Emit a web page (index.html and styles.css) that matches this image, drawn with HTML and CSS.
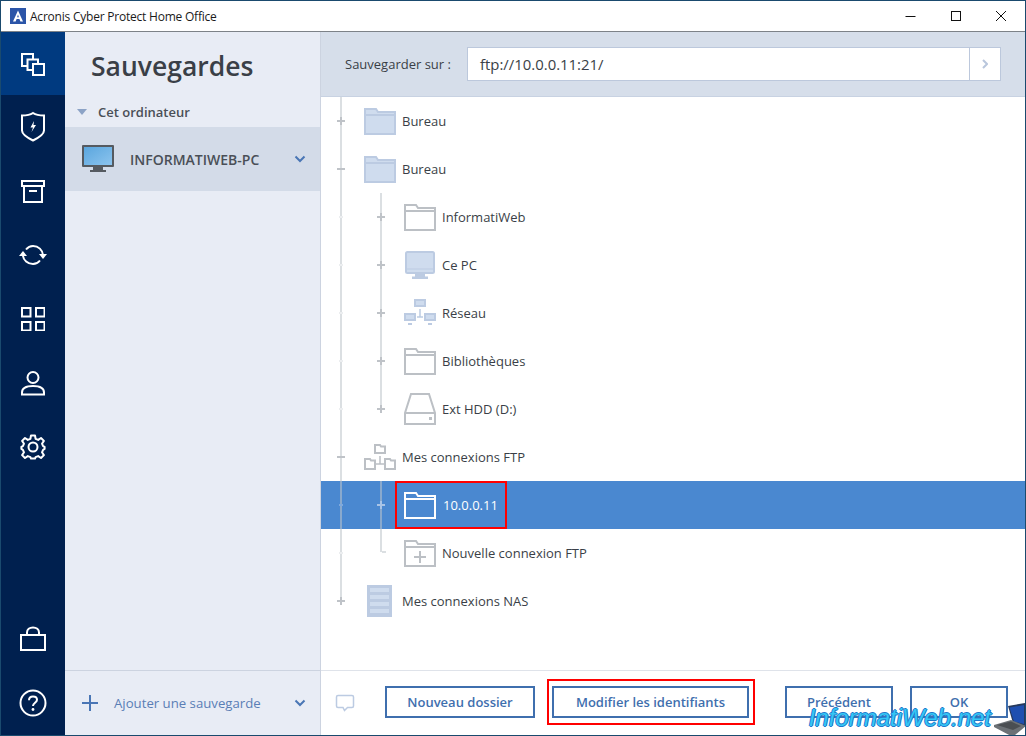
FILE: index.html
```html
<!DOCTYPE html>
<html lang="fr">
<head>
<meta charset="utf-8">
<title>Acronis Cyber Protect Home Office</title>
<link rel="stylesheet" href="styles.css">
</head>
<body>
<div class="window">
  <header class="titlebar">
    <svg class="applogo" width="16" height="16" viewBox="0 0 16 16"><rect width="16" height="16" fill="#2b55a8"/><path d="M8 2.500 L3 13.500 H5.600 L6.600 11 H9.400 L10.400 13.500 H13 Z M8 6.500 L8.900 9.200 H7.100 Z" fill="#fff" fill-rule="evenodd"/></svg>
    <span class="apptitle">Acronis Cyber Protect Home Office</span>
    <div class="winctrls">
      <svg width="12" height="12" viewBox="0 0 12 12"><path d="M0.500 6.500H10.500" stroke="#111" fill="none"/></svg>
      <svg width="12" height="12" viewBox="0 0 12 12"><rect x="1.500" y="1.500" width="9" height="9" stroke="#111" fill="none"/></svg>
      <svg width="12" height="12" viewBox="0 0 12 12"><path d="M1 1L11 11M11 1L1 11" stroke="#111" fill="none"/></svg>
    </div>
  </header>
  <div class="body">
    <nav class="rail">
      <div class="railtop">
        <div class="railitem active">
          <svg width="26" height="26" viewBox="0 0 26 26" fill="none" stroke="#fff" stroke-width="2"><path d="M7 15H2V3H13V8"/><path d="M13 19H7.500V8.500H18V13"/><rect x="13" y="13" width="11" height="11" fill="#003a80"/></svg>
        </div>
        <div class="railitem">
          <svg width="26" height="32" viewBox="0 0 26 32" fill="none" stroke="#fff" stroke-width="2"><path d="M2 4.500C6 4.500 10 4 13 2C16 4 20 4.500 24 4.500V19.500C24 23.500 17 27.500 13 29.500C9 27.500 2 23.500 2 19.500Z"/><path d="M14 10L10.500 16.500H13L11.500 21L16 14H13.500Z" fill="#fff" stroke="none"/></svg>
        </div>
        <div class="railitem">
          <svg width="24" height="24" viewBox="0 0 24 24" fill="none" stroke="#fff" stroke-width="2"><rect x="1" y="2" width="22" height="5"/><path d="M3 7V23H21V7"/><path d="M8 12H16"/></svg>
        </div>
        <div class="railitem">
          <svg width="28" height="24" viewBox="0 0 28 24" fill="none" stroke="#fff" stroke-width="2"><path d="M7 6.500C9 4 11.500 3 14 3C19.500 3 23.500 7 24 12"/><path d="M21 17.500C19 20 16.500 21 14 21C8.500 21 4.500 17 4 13"/><path d="M0 13H8L4 8Z" fill="#fff" stroke="none"/><path d="M20 11H28L24 16Z" fill="#fff" stroke="none"/></svg>
        </div>
        <div class="railitem">
          <svg width="24" height="24" viewBox="0 0 24 24" fill="none" stroke="#fff" stroke-width="2"><rect x="1" y="1" width="8.500" height="8.500"/><rect x="15" y="1" width="8.500" height="8.500"/><rect x="1" y="15" width="8.500" height="8.500"/><rect x="15" y="15" width="8.500" height="8.500"/></svg>
        </div>
        <div class="railitem">
          <svg width="26" height="26" viewBox="0 0 26 26" fill="none" stroke="#fff" stroke-width="2"><circle cx="13" cy="7.500" r="5.500"/><path d="M2 24.500V22.500C2 18 7 16 13 16C19 16 24 18 24 22.500V24.500Z"/></svg>
        </div>
        <div class="railitem">
          <svg width="26" height="26" viewBox="0 0 26 26" fill="none" stroke="#fff" stroke-width="2" stroke-linejoin="round"><circle cx="13" cy="13" r="4.500"/><path d="M11 1.500H15L15.600 4.800L18.200 5.900L21 4L23.900 6.900L22 9.700L23.100 12.200L24.600 13L24.600 14.900L23.100 15.800L22 18.300L23.900 21.100L21 24L18.200 22.100L15.600 23.200L15 24.600H11L10.400 23.200L7.800 22.100L5 24L2.100 21.100L4 18.300L2.900 15.800L1.400 14.900V13L2.900 12.200L4 9.700L2.100 6.900L5 4L7.800 5.900L10.400 4.800Z"/></svg>
        </div>
      </div>
      <div class="railbottom">
        <div class="railitem">
          <svg width="28" height="26" viewBox="0 0 28 26" fill="none" stroke="#fff" stroke-width="2"><rect x="2" y="9" width="24" height="15"/><path d="M8 9V6.500C8 3.500 10.500 1.500 14 1.500C17.500 1.500 20 3.500 20 6.500V9"/></svg>
        </div>
        <div class="railitem">
          <svg width="28" height="28" viewBox="0 0 28 28" fill="none" stroke="#fff" stroke-width="2"><circle cx="14" cy="14" r="12.500"/><path d="M10 11.200C10 8.800 11.800 7.500 14 7.500C16.300 7.500 18 8.800 18 10.800C18 13.800 14 13.800 14 17"/><circle cx="14" cy="20.500" r="1.400" fill="#fff" stroke="none"/></svg>
        </div>
      </div>
    </nav>

    <aside class="sidebar">
      <h1 class="side-title">Sauvegardes</h1>
      <div class="side-group"><span class="tri"></span>Cet ordinateur</div>
      <div class="side-item">
        <svg width="32" height="28" viewBox="0 0 32 28"><defs><linearGradient id="scr" x1="0" y1="0" x2="1" y2="1"><stop offset="0" stop-color="#5aa6de"/><stop offset="1" stop-color="#8cc4ee"/></linearGradient></defs><rect x="0" y="0" width="32" height="22" rx="1" fill="#555a60"/><rect x="2" y="2" width="28" height="18" fill="url(#scr)"/><rect x="11" y="22" width="10" height="3" fill="#555a60"/><rect x="8" y="25" width="16" height="2" fill="#555a60"/></svg>
        <span class="side-name">INFORMATIWEB-PC</span>
        <svg class="chev" width="12" height="8" viewBox="0 0 12 8"><path d="M1.500 1.500L6 6L10.500 1.500" fill="none" stroke="#4a76b5" stroke-width="2"/></svg>
      </div>
      <div class="side-foot">
        <svg width="18" height="18" viewBox="0 0 18 18"><path d="M9 1V17M1 9H17" stroke="#4a76b5" stroke-width="2" fill="none"/></svg>
        <span class="add-label">Ajouter une sauvegarde</span>
        <svg class="chev" width="12" height="8" viewBox="0 0 12 8"><path d="M1.500 1.500L6 6L10.500 1.500" fill="none" stroke="#4a76b5" stroke-width="2"/></svg>
      </div>
    </aside>

    <main class="main">
      <div class="pathbar">
        <label class="pathlabel">Sauvegarder sur :</label>
        <div class="pathinput">
          <span class="pathvalue">ftp://10.0.0.11:21/</span>
          <span class="pathgo"><svg width="6" height="10" viewBox="0 0 6 10"><path d="M1 1L5 5L1 9" fill="none" stroke="#b9c6dc" stroke-width="2"/></svg></span>
        </div>
      </div>

      <div class="tree">
        <i class="line l1"></i>
        <i class="line l2a"></i>
        <i class="line l2b"></i>
        <i class="line l2c"></i>

        <div class="row">
          <span class="exp plus"></span>
          <svg class="ic" width="32" height="28" viewBox="0 0 32 28"><path d="M1 27V2H12L14 5H31V27Z" fill="#cfdcee" stroke="#bccbe2" stroke-width="2"/><path d="M1 8H31" stroke="#bccbe2" stroke-width="2"/></svg>
          <span class="lbl">Bureau</span>
        </div>
        <div class="row">
          <span class="exp minus"></span>
          <svg class="ic" width="32" height="28" viewBox="0 0 32 28"><path d="M1 27V2H12L14 5H31V27Z" fill="#cfdcee" stroke="#bccbe2" stroke-width="2"/><path d="M1 8H31" stroke="#bccbe2" stroke-width="2"/></svg>
          <span class="lbl">Bureau</span>
        </div>
        <div class="row sub">
          <span class="tick"></span><span class="exp plus"></span>
          <svg class="ic" width="32" height="28" viewBox="0 0 32 28"><path d="M1 27V2H12L14 5H31V27Z" fill="#fff" stroke="#bcc0c5" stroke-width="2"/><path d="M1 8H31" stroke="#bcc0c5" stroke-width="2"/></svg>
          <span class="lbl">InformatiWeb</span>
        </div>
        <div class="row sub">
          <span class="tick"></span><span class="exp plus"></span>
          <svg class="ic" width="32" height="28" viewBox="0 0 32 28"><rect x="2" y="1" width="28" height="21" rx="1.500" fill="#cfdcee" stroke="#bccbe2" stroke-width="2"/><path d="M2 18H30" stroke="#bccbe2" stroke-width="1"/><path d="M11 23H21V25.500H24V28H8V25.500H11Z" fill="#bccbe2"/></svg>
          <span class="lbl">Ce PC</span>
        </div>
        <div class="row sub">
          <span class="tick"></span><span class="exp plus"></span>
          <svg class="ic" width="32" height="28" viewBox="0 0 32 28" fill="#cfdcee" stroke="#bccbe2" stroke-width="2"><rect x="11" y="1" width="10" height="6"/><rect x="1" y="15" width="10" height="6"/><rect x="21" y="15" width="10" height="6"/><path d="M16 10V18M13 18H19" fill="none" stroke-width="1.500"/><path d="M4 25H8M24 25H28" fill="none"/></svg>
          <span class="lbl">Réseau</span>
        </div>
        <div class="row sub">
          <span class="tick"></span><span class="exp plus"></span>
          <svg class="ic" width="32" height="28" viewBox="0 0 32 28"><path d="M1 27V2H12L14 5H31V27Z" fill="#fff" stroke="#bcc0c5" stroke-width="2"/><path d="M1 8H31" stroke="#bcc0c5" stroke-width="2"/></svg>
          <span class="lbl">Bibliothèques</span>
        </div>
        <div class="row sub">
          <span class="tick"></span><span class="exp plus"></span>
          <svg class="ic" width="32" height="32" viewBox="0 0 32 32" fill="none" stroke="#bcc0c5" stroke-width="2"><path d="M7 1H25L31 20V31H1V20Z" fill="#fff"/><path d="M1 20H31"/><rect x="25" y="24" width="3" height="3" fill="#bcc0c5" stroke="none"/></svg>
          <span class="lbl">Ext HDD (D:)</span>
        </div>
        <div class="row">
          <span class="exp minus"></span>
          <svg class="ic" width="32" height="26" viewBox="0 0 32 26" fill="#fff" stroke="#bcc0c5" stroke-width="2"><path d="M11 9V1H16L17 2.500H21V9Z"/><path d="M1 25V15H6L7 16.500H11V25Z"/><path d="M21 25V15H26L27 16.500H31V25Z"/><path d="M16 12V20M12 20H20" fill="none" stroke-width="1.500"/></svg>
          <span class="lbl">Mes connexions FTP</span>
        </div>
        <div class="row sub selected">
          <span class="tick"></span><span class="exp plus"></span>
          <div class="mark">
            <svg class="ic" width="32" height="28" viewBox="0 0 32 28"><path d="M1 27V2H12L14 5H31V27Z" fill="none" stroke="#fff" stroke-width="2"/><path d="M1 8H31" stroke="#fff" stroke-width="2"/></svg>
            <span class="lbl">10.0.0.11</span>
          </div>
        </div>
        <div class="row sub">
          <span class="tick"></span><span class="exp"></span>
          <svg class="ic" width="32" height="28" viewBox="0 0 32 28"><path d="M1 27V2H12L14 5H31V27Z" fill="#fff" stroke="#bcc0c5" stroke-width="2"/><path d="M1 8H31" stroke="#bcc0c5" stroke-width="2"/><path d="M16 12V24M10 18H22" stroke="#bcc0c5" stroke-width="2"/></svg>
          <span class="lbl">Nouvelle connexion FTP</span>
        </div>
        <div class="row">
          <span class="exp plus"></span>
          <svg class="ic nas" width="25" height="32" viewBox="0 0 25 32"><rect width="25" height="32" fill="#bccbe2"/><path d="M3 4H22M3 6H22M3 11H22M3 13H22M3 18H22M3 20H22M3 25H22M3 27H22" stroke="#cfdcee" stroke-width="2"/></svg>
          <span class="lbl">Mes connexions NAS</span>
        </div>
      </div>

      <footer class="actions">
        <svg class="bubble" width="20" height="18" viewBox="0 0 20 18"><path d="M3 1.500H17C18 1.500 18.500 2 18.500 3V12C18.500 13 18 13.500 17 13.500H12.500L9.500 16.500L8 13.500H3C2 13.500 1.500 13 1.500 12V3C1.500 2 2 1.500 3 1.500Z" fill="none" stroke="#bccbe2" stroke-width="1.500"/></svg>
        <button class="btn btn-new">Nouveau dossier</button>
        <div class="redbox"><button class="btn btn-mod">Modifier les identifiants</button></div>
        <button class="btn btn-prev">Précédent</button>
        <button class="btn btn-ok">OK</button>
      </footer>
    </main>
  </div>
  <div class="watermark">
    <span class="wm-text">InformatiWeb.net</span>
    <svg width="32" height="34" viewBox="0 0 32 34"><path d="M14 4L31 1V25L19 21Z" fill="#27395c"/><path d="M15.500 5.500L30 3V22L20 19.500Z" fill="#1f4fb0"/><path d="M0 23L17 18L32 24L21 33L17 34L0 25Z" fill="#6c7176"/><path d="M3 23L17 19.500L27 24L19 28Z" fill="#4a4e52"/></svg>
  </div>
</div>
</body>
</html>
```
FILE: styles.css
```css
* { box-sizing: border-box; }
html, body { margin: 0; padding: 0; }
body { font-family: "Open Sans", "Liberation Sans", sans-serif; color: #3a3f47; }
.window {
  position: relative;
  width: 1026px;
  height: 736px;
  border: 1px solid #1a4a6e;
  display: flex;
  flex-direction: column;
  overflow: hidden;
  background: #fff;
}
.titlebar {
  height: 31px;
  flex: none;
  display: flex;
  align-items: center;
  background: #fff;
  border-bottom: 1px solid #7d8288;
  padding-left: 9px;
}
.applogo { flex: none; }
.apptitle { margin-left: 4px; font-size: 12px; color: #1a1a1a; letter-spacing: -0.22px; }
.winctrls { margin-left: auto; display: flex; gap: 33px; padding-right: 18px; }
.body { flex: 1; display: flex; min-height: 0; }
.rail {
  width: 64px;
  flex: none;
  background: #00204f;
  display: flex;
  flex-direction: column;
  justify-content: space-between;
}
.railitem { height: 64px; display: flex; align-items: center; justify-content: center; }
.railitem.active { height: 63px; background: #003a80; }
.sidebar {
  width: 256px;
  flex: none;
  background: #e8ecf5;
  border-right: 1px solid #ccd3e0;
  display: flex;
  flex-direction: column;
}
.side-title { margin: 0; height: 63px; padding: 14px 0 0 26px; font-size: 26.5px; line-height: 40px; font-weight: 600; color: #3a3f47; }
.side-group { height: 32px; display: flex; align-items: center; padding: 2px 0 0 12px; font-size: 13px; font-weight: 600; color: #4a4f57; }
.tri { width: 0; height: 0; border-left: 5px solid transparent; border-right: 5px solid transparent; border-top: 6px solid #8ca3c6; margin-right: 11px; }
.side-item { height: 64px; background: #d3dbe8; display: flex; align-items: center; padding-left: 17px; }
.side-name { margin-left: 16px; font-size: 14px; font-weight: 600; color: #4a4f57; }
.chev { margin-left: auto; margin-right: 14px; flex: none; }
.side-foot { margin-top: auto; height: 65px; border-top: 1px solid #ccd3e0; display: flex; align-items: center; padding-left: 16px; }
.add-label { margin-left: 15px; font-size: 13.2px; color: #5a7eb5; }
.main { flex: 1; min-width: 0; display: flex; flex-direction: column; }
.pathbar {
  height: 65px;
  flex: none;
  background: #d6deea;
  display: flex;
  align-items: center;
  padding-left: 24px;
  border-bottom: 1px solid #c8d2e2;
}
.pathlabel { width: 122px; font-size: 13px; color: #3a3f47; }
.pathinput { width: 534px; height: 34px; background: #fff; border: 1px solid #bcc8dc; display: flex; align-items: center; }
.pathvalue { flex: 1; padding-left: 12px; font-size: 14.9px; color: #3a3f47; }
.pathgo { width: 31px; height: 100%; border-left: 1px solid #bcc8dc; display: flex; align-items: center; justify-content: center; }
.tree { position: relative; flex: 1; min-height: 0; }
.line { position: absolute; z-index: 1; background: rgba(190, 196, 203, 0.55); }
.l1 { left: 19px; top: 0; width: 2px; height: 504px; }
.l2a { left: 59px; top: 96px; width: 2px; height: 216px; }
.l2b { left: 59px; top: 384px; width: 2px; height: 71px; }
.l2c { left: 61px; top: 454px; width: 4px; height: 2px; }
.row { position: relative; height: 48px; display: flex; align-items: center; }
.row.sub { padding-left: 40px; }
.exp { position: relative; z-index: 2; width: 40px; height: 48px; flex: none; }
.exp.plus::before, .exp.minus::before {
  content: ""; position: absolute; left: 16px; top: 23px; width: 8px; height: 2px; background: #bfc3c8;
}
.exp.plus::after {
  content: ""; position: absolute; left: 19px; top: 20px; width: 2px; height: 8px; background: #bfc3c8;
}
.tick { position: absolute; z-index: 2; left: 18px; top: 23px; width: 4px; height: 2px; background: #eceef0; }
.ic { flex: none; margin-left: 3px; }
.nas { margin-left: 6px; margin-right: 4px; }
.lbl { margin-left: 6px; font-size: 13px; color: #3a3f47; white-space: nowrap; }
.row.selected { background: #4a88d0; }
.row.selected .lbl { color: #fff; margin-left: 7px; }
.row.selected .exp::before, .row.selected .exp::after { background: #a9c4e6; }
.row.selected .tick { background: #7ea9dd; }
.mark { height: 48px; width: 112px; margin-left: -6px; border: 2px solid #f00; display: flex; align-items: center; padding-left: 4px; }
.actions {
  height: 65px;
  flex: none;
  border-top: 1px solid #dfe3ea;
  display: flex;
  align-items: center;
  padding: 0 0 2px 14px;
}
.bubble { flex: none; margin-top: 2px; }
.btn {
  height: 32px;
  background: #fff;
  border: 2px solid #3f6fae;
  font-family: inherit;
  font-size: 13px;
  font-weight: 600;
  color: #3f6fae;
  padding: 0;
}
.btn-new { width: 150px; margin-left: 30px; }
.redbox { margin-left: 12px; padding: 5px 4px 5px 3px; border: 2px solid #f00; display: flex; }
.btn-mod { width: 197px; }
.btn-prev { width: 108px; margin-left: 30px; }
.btn-ok { width: 98px; margin-left: 17px; }
.watermark { position: absolute; right: -1px; bottom: -1px; display: flex; align-items: flex-end; gap: 3px; z-index: 5; }
.wm-text {
  font-family: "Liberation Sans", sans-serif;
  font-style: italic;
  font-size: 24px;
  line-height: 30px;
  margin-bottom: 3px;
  color: #35c6f4;
  text-shadow: -1px 0 0 #1f78cc, 1px 0 0 #1f78cc, 0 -1px 0 #1f78cc, 0 1px 0 #1f78cc;
}
```
